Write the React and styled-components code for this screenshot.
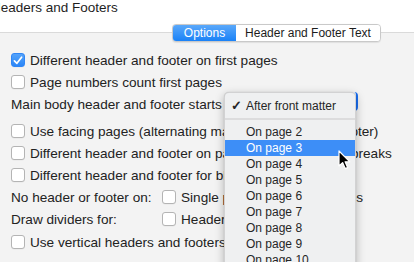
import React from 'react'
import styled, { createGlobalStyle } from 'styled-components'

const Global = createGlobalStyle`
  html, body { margin: 0; padding: 0; background: #f3f3f3; }
  body { font-family: "Liberation Sans", Arial, sans-serif; -webkit-font-smoothing: antialiased; }
`

const Window = styled.div`
  position: relative;
  width: 414px;
  height: 262px;
  overflow: hidden;
  background: #f3f3f3;
  color: #222;
`

const TitleBar = styled.div`
  height: 33px;
  background: #ffffff;
  border-bottom: 1px solid #dadada;
  box-sizing: border-box;
`

const Title = styled.div`
  margin-left: -9px;
  font-size: 13.5px;
  line-height: 16px;
  color: #1e1e1e;
`

const Panel = styled.div`
  display: flex;
  flex-direction: column;
`

const TabStrip = styled.div`
  display: flex;
  justify-content: flex-end;
  padding-right: 33px;
  margin-top: -9px;
`

const Segmented = styled.div`
  display: flex;
  height: 18px;
  border: 1px solid #c9c9c9;
  border-radius: 4px;
  overflow: hidden;
  background: #fff;
  box-sizing: border-box;
  box-shadow: 0 0.5px 1px rgba(0,0,0,0.08);
`

const Segment = styled.div`
  width: ${p => p.$w}px;
  display: flex;
  align-items: center;
  justify-content: center;
  font-size: 12px;
  color: ${p => (p.$active ? '#fff' : '#1c1c1c')};
  background: ${p => (p.$active ? 'linear-gradient(#5aa8fa, #1a82f7)' : '#fff')};
`

const Rows = styled.div`
  display: flex;
  flex-direction: column;
  padding-top: 7px;
`

const Row = styled.div`
  display: flex;
  align-items: center;
  height: 22px;
  padding-left: 11px;
  margin-top: ${p => p.$mt || 0}px;
  font-size: 13.6px;
  white-space: nowrap;
`

const Label = styled.span`
  width: ${p => (p.$w ? `${p.$w}px` : 'auto')};
  flex-shrink: 0;
`

const Check = styled.span`
  width: 14px;
  height: 14px;
  box-sizing: border-box;
  flex-shrink: 0;
  border-radius: 3px;
  margin-right: 5px;
  display: flex;
  align-items: center;
  justify-content: center;
  border: 1px solid ${p => (p.$on ? '#2f86f6' : '#b4b4b4')};
  background: ${p => (p.$on ? 'linear-gradient(#54a3fa, #2b86f7)' : '#fff')};
  box-shadow: 0 0.5px 0.5px rgba(0,0,0,0.06);
`

const PopupButton = styled.div`
  width: 128px;
  height: 19px;
  margin-left: auto;
  margin-right: 56px;
  margin-top: -5px;
  flex-shrink: 0;
  border-radius: 4px;
  background: #fff;
  border-right: 2px solid #1a6ff2;
  box-sizing: border-box;
`

const Menu = styled.div`
  position: absolute;
  left: 224px;
  top: 92px;
  width: 132px;
  height: 190px;
  box-sizing: border-box;
  padding-top: 5px;
  background: #eff0f1;
  border: 0.5px solid rgba(0,0,0,0.12);
  border-radius: 5px;
  box-shadow: 0 3px 10px rgba(0,0,0,0.28), 0 0 1px rgba(0,0,0,0.2);
  font-size: 12px;
`

const Item = styled.div`
  position: relative;
  height: 16px;
  line-height: 16px;
  padding-left: 21px;
  color: ${p => (p.$hi ? '#fff' : '#262626')};
  background: ${p => (p.$hi ? '#3d8ef7' : 'transparent')};
`

const Tick = styled.span`
  position: absolute;
  left: 6px;
  top: 0;
  font-size: 12.5px;
  font-weight: bold;
`

const Separator = styled.div`
  height: 10px;
  display: flex;
  align-items: center;
  &::after {
    content: '';
    flex: 1;
    height: 2px;
    background: #dcdcdd;
  }
`

const Cursor = styled.svg`
  position: absolute;
  left: 338px;
  top: 150px;
`

const CheckMark = () => (
  <svg width="10" height="9" viewBox="0 0 10 9">
    <path d="M1.4 4.8 L3.9 7.3 L8.6 1.2" fill="none" stroke="#fff" strokeWidth="1.7" strokeLinecap="round" strokeLinejoin="round" />
  </svg>
)

const CheckRow = ({ on, children, mt }) => (
  <Row $mt={mt}>
    <Check $on={on}>{on && <CheckMark />}</Check>
    <span>{children}</span>
  </Row>
)

const pages = [2, 3, 4, 5, 6, 7, 8, 9, 10]

export default function App() {
  return (
    <Window>
      <Global />
      <TitleBar>
        <Title>Headers and Footers</Title>
      </TitleBar>
      <Panel>
        <TabStrip>
          <Segmented>
            <Segment $active $w={63}>Options</Segment>
            <Segment $w={144}>Header and Footer Text</Segment>
          </Segmented>
        </TabStrip>
        <Rows>
          <CheckRow on>Different header and footer on first pages</CheckRow>
          <CheckRow>Page numbers count first pages</CheckRow>
          <Row>
            <Label>Main body header and footer starts</Label>
            <PopupButton />
          </Row>
          <CheckRow mt={5}>Use facing pages (alternating margins, header and footer)</CheckRow>
          <CheckRow>Different header and footer on pages after all section breaks</CheckRow>
          <CheckRow>Different header and footer for blank pages</CheckRow>
          <Row>
            <Label $w={151}>No header or footer on:</Label>
            <Check />
            <span>Single pages and blank pages</span>
          </Row>
          <Row>
            <Label $w={151}>Draw dividers for:</Label>
            <Check />
            <span>Headers</span>
          </Row>
          <CheckRow mt={1}>Use vertical headers and footers</CheckRow>
        </Rows>
      </Panel>

      <Menu>
        <Item><Tick>✓</Tick>After front matter</Item>
        <Separator />
        {pages.map(n => (
          <Item key={n} $hi={n === 3}>On page {n}</Item>
        ))}
      </Menu>

      <Cursor width="13" height="20" viewBox="0 0 13 20">
        <path d="M1 1 L1 16 L4.6 12.6 L7.2 18.6 L9.6 17.6 L7.1 11.8 L11.8 11.8 Z" fill="#000" stroke="#fff" strokeWidth="1.2" strokeLinejoin="round" />
      </Cursor>
    </Window>
  )
}
